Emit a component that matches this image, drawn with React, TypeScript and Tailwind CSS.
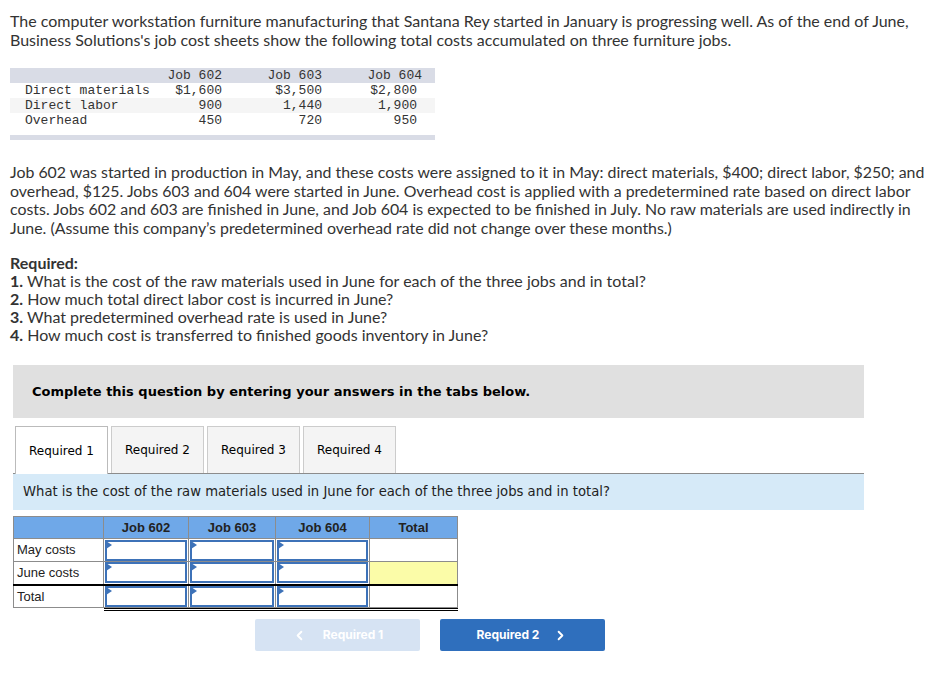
import React from 'react';
import { ChevronLeft, ChevronRight } from 'lucide-react';

const costRows = [
  { label: 'Direct materials', a: '$1,600', b: '$3,500', c: '$2,800', shade: false },
  { label: 'Direct labor', a: '900', b: '1,440', c: '1,900', shade: true },
  { label: 'Overhead', a: '450', b: '720', c: '950', shade: false },
];

function InputCell({ w }: { w: string }) {
  return (
    <td className={`${w} border border-[#8c8c8c] p-0 h-[23px] bg-white`}>
      <div className="relative mx-px h-[21px] border-2 border-[#3d72b8] bg-white">
        <div className="absolute -left-px -top-px h-0 w-0 border-y-[4px] border-l-[6px] border-y-transparent border-l-[#3d72b8]" />
      </div>
    </td>
  );
}

export default function App() {
  const body = { fontFamily: '"Lato", "Open Sans", sans-serif' };
  const verdana = { fontFamily: '"DejaVu Sans", Verdana, sans-serif' };
  return (
    <div className="w-[939px] h-[675px] bg-white text-[#333] overflow-hidden">
      <div className="px-[10px] pt-[11px] text-[16px] leading-[19px] whitespace-nowrap" style={body}>
        <p>
          The computer workstation furniture manufacturing that Santana Rey started in January is progressing well. As of the end of June,
          <br />
          Business Solutions's job cost sheets show the following total costs accumulated on three furniture jobs.
        </p>

        {/* job cost table */}
        <div className="mt-[19px] w-[425px] text-[13px] leading-[14px] text-[#333]" style={{ fontFamily: '"Liberation Mono", monospace' }}>
          <div className="flex h-[15px] pt-px bg-[#d9dce6]">
            <div className="w-[145px]" />
            <div className="w-[67px] text-right">Job 602</div>
            <div className="w-[100px] text-right">Job 603</div>
            <div className="w-[100px] text-right">Job 604</div>
          </div>
          {costRows.map((r) => (
            <div key={r.label} className={`flex h-[15px] pt-px ${r.shade ? 'bg-[#f5f5f5]' : ''}`}>
              <div className="w-[145px] pl-[15px]">{r.label}</div>
              <div className="w-[67px] text-right">{r.a}</div>
              <div className="w-[100px] text-right">{r.b}</div>
              <div className="w-[95px] text-right">{r.c}</div>
            </div>
          ))}
          <div className="mt-[7px] h-[5px] bg-[#d9dce6]" />
        </div>

        <p className="mt-[23px] leading-[18.5px] text-[15.9px]">
          Job 602 was started in production in May, and these costs were assigned to it in May: direct materials, $400; direct labor, $250; and
          <br />
          overhead, $125. Jobs 603 and 604 were started in June. Overhead cost is applied with a predetermined rate based on direct labor
          <br />
          costs. Jobs 602 and 603 are finished in June, and Job 604 is expected to be finished in July. No raw materials are used indirectly in
          <br />
          June. (Assume this company’s predetermined overhead rate did not change over these months.)
        </p>

        <div className="mt-[17px] leading-[18px]">
          <p className="font-bold">Required:</p>
          <p><b>1.</b> What is the cost of the raw materials used in June for each of the three jobs and in total?</p>
          <p><b>2.</b> How much total direct labor cost is incurred in June?</p>
          <p><b>3.</b> What predetermined overhead rate is used in June?</p>
          <p><b>4.</b> How much cost is transferred to finished goods inventory in June?</p>
        </div>
      </div>

      {/* answer area */}
      <div className="ml-[13px] w-[851px]" style={verdana}>
        <div className="mt-[21px] flex h-[53px] items-center bg-[#e0e0e0] pl-[19px] text-[13px] font-bold text-black">
          Complete this question by entering your answers in the tabs below.
        </div>

        <div className="mt-[8px] flex gap-[3px] pl-[2px] border-b border-[#8c8c8c] text-[12px] text-black">
          <div className="flex h-[48px] w-[93px] items-center justify-center border border-b-0 border-[#bbb] bg-white -mb-px">Required 1</div>
          <div className="flex h-[47px] w-[93px] items-center justify-center border border-b-0 border-[#ccc] bg-[#f4f4f4]">Required 2</div>
          <div className="flex h-[47px] w-[93px] items-center justify-center border border-b-0 border-[#ccc] bg-[#f4f4f4]">Required 3</div>
          <div className="flex h-[47px] w-[93px] items-center justify-center border border-b-0 border-[#ccc] bg-[#f4f4f4]">Required 4</div>
        </div>

        <div className="flex h-[36px] items-center bg-[#d6eaf8] pl-[10px] text-[13.2px] text-[#222]">
          What is the cost of the raw materials used in June for each of the three jobs and in total?
        </div>

        <table className="mt-[6px] border-collapse text-[13px] text-[#222]" style={{ fontFamily: '"Liberation Sans", Arial, sans-serif' }}>
          <thead>
            <tr className="h-[22px] bg-[#6fa8e8] font-bold">
              <th className="w-[90px] border border-[#8c8c8c]" />
              <th className="w-[85px] border border-[#8c8c8c]">Job 602</th>
              <th className="w-[87px] border border-[#8c8c8c]">Job 603</th>
              <th className="w-[94px] border border-[#8c8c8c]">Job 604</th>
              <th className="w-[88px] border border-[#8c8c8c]">Total</th>
            </tr>
          </thead>
          <tbody>
            <tr>
              <td className="border border-[#8c8c8c] pl-[3px] h-[23px]">May costs</td>
              <InputCell w="w-[85px]" />
              <InputCell w="w-[87px]" />
              <InputCell w="w-[94px]" />
              <td className="border border-[#8c8c8c] bg-white" />
            </tr>
            <tr className="border-b-2 border-b-black">
              <td className="border border-[#8c8c8c] pl-[3px] h-[23px]">June costs</td>
              <InputCell w="w-[85px]" />
              <InputCell w="w-[87px]" />
              <InputCell w="w-[94px]" />
              <td className="border border-[#8c8c8c] border-b-2 border-b-black bg-[#fbfca8]" />
            </tr>
            <tr>
              <td className="border border-[#8c8c8c] pl-[3px] h-[23px]">Total</td>
              <InputCell w="w-[85px]" />
              <InputCell w="w-[87px]" />
              <InputCell w="w-[94px]" />
              <td className="border border-[#8c8c8c] bg-white" />
            </tr>
          </tbody>
          <tfoot>
            <tr>
              <td className="p-0" />
              <td colSpan={4} className="p-0">
                <div className="h-[3px] border-y border-black" />
              </td>
            </tr>
          </tfoot>
        </table>

        <div className="mt-[8px] flex gap-[20px] pl-[242px] text-[12px] font-bold text-white" style={{ fontFamily: '"Inter", sans-serif' }}>
          <div className="flex h-[32px] w-[165px] items-center justify-center gap-[16px] rounded-[2px] bg-[#d6e3f3]">
            <ChevronLeft size={15} strokeWidth={3} />
            <span>Required 1</span>
          </div>
          <div className="flex h-[32px] w-[165px] items-center justify-center gap-[14px] rounded-[2px] bg-[#2f6fbd]">
            <span>Required 2</span>
            <ChevronRight size={15} strokeWidth={3} />
          </div>
        </div>
      </div>
    </div>
  );
}
